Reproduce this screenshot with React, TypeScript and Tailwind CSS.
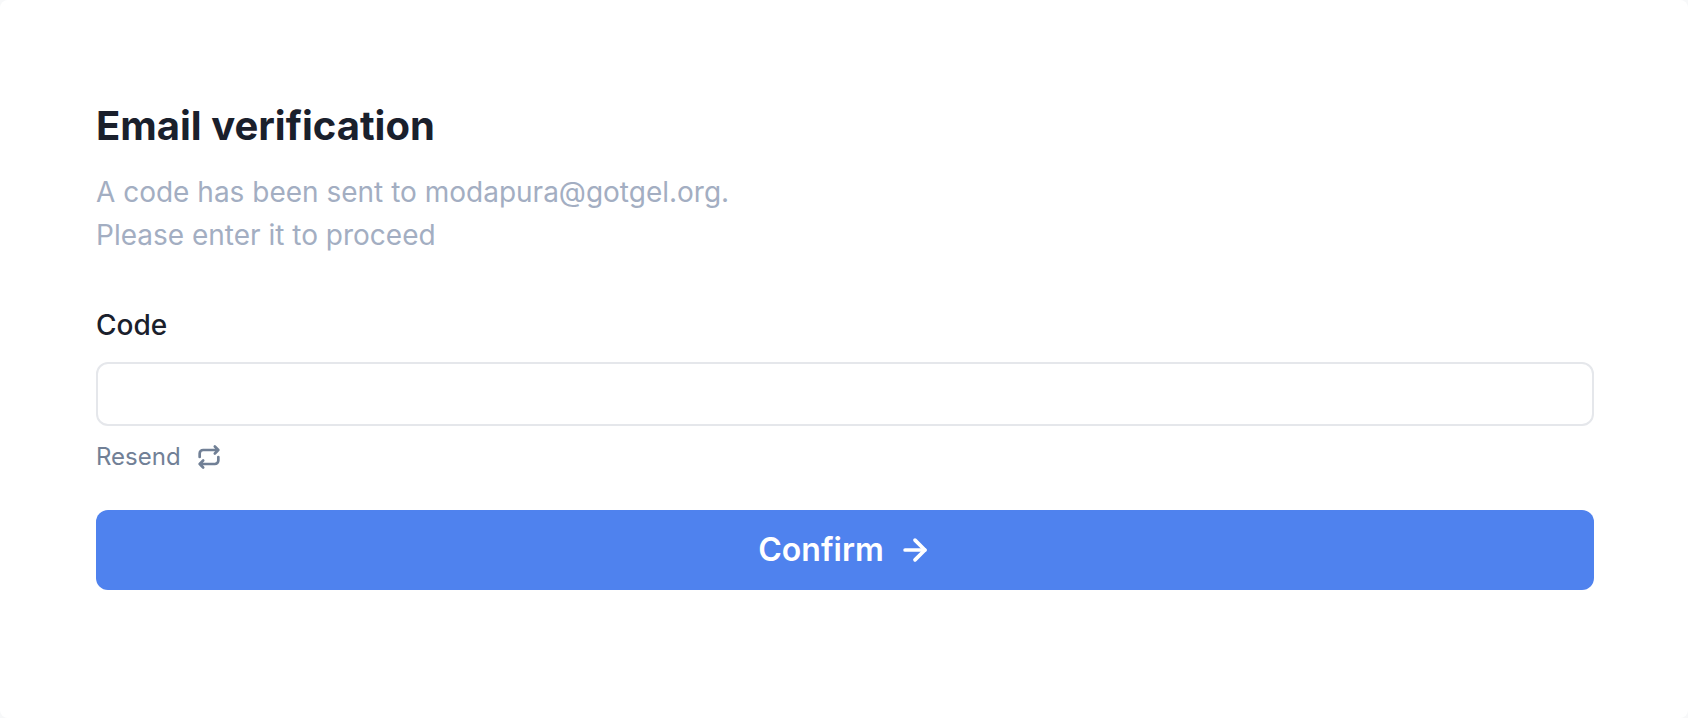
import { ArrowRight } from "lucide-react";

export default function App() {
  return (
    <div className="min-h-[718px] bg-[#f7f8f9]">
      <div className="min-h-[718px] rounded-[8px] bg-white pt-[100px] pr-[94px] pl-[96px] font-['Inter',sans-serif]">
        <h1 className="text-[40px] leading-[52px] font-bold text-[#1a202c]">Email verification</h1>
        <p className="mt-[19px] text-[28px] leading-[43px] text-[#a3aec2]">
          A code has been sent to modapura@gotgel.org.
          <br />
          Please enter it to proceed
        </p>

        <label className="mt-[50px] block text-[28px] leading-[36px] font-medium text-[#1a202c]">Code</label>
        <input className="mt-[19px] block h-[64px] w-full rounded-[12px] border-2 border-[#e5e7eb] bg-white" />

        <button className="mt-[11px] flex h-[40px] items-center gap-[14px] text-[24px] text-[#718096]">
          Resend
          <svg width="28" height="28" viewBox="0 0 24 24" fill="none" stroke="currentColor" strokeWidth="2.3" strokeLinecap="round" strokeLinejoin="round">
            <path d="M4 12v-3a3 3 0 0 1 3 -3h13m-3 -3l3 3l-3 3" />
            <path d="M20 12v3a3 3 0 0 1 -3 3h-13m3 3l-3 -3l3 -3" />
          </svg>
        </button>

        <button className="mt-[33px] flex h-[80px] w-full items-center justify-center gap-[14px] rounded-[12px] bg-[#4f82ee] text-[32px] font-semibold text-white">
          Confirm
          <ArrowRight size={34} strokeWidth={2.6} />
        </button>
      </div>
    </div>
  );
}
